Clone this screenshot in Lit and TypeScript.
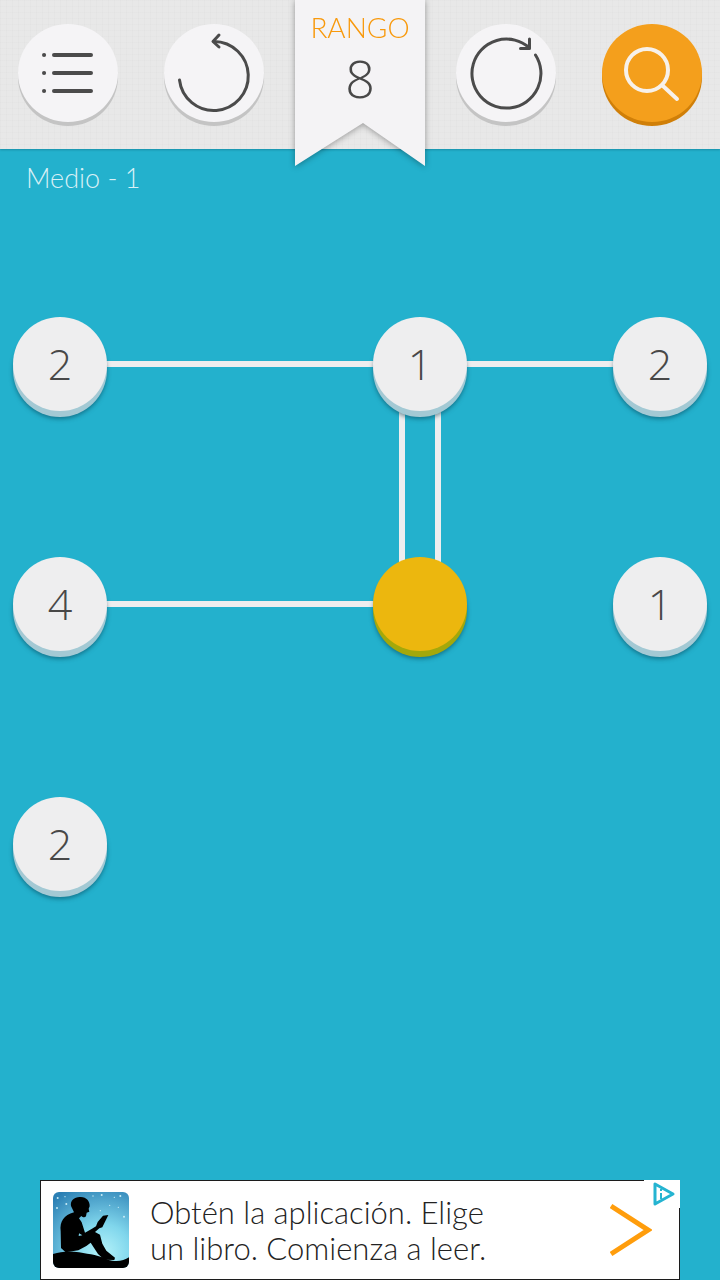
import { LitElement, html, css, svg, nothing } from "lit";
import { customElement, property, state } from "lit/decorators.js";
import { classMap } from "lit/directives/class-map.js";
import { styleMap } from "lit/directives/style-map.js";

interface GameNode {
  col: number;
  row: number;
  left: number;
}

interface Bridge {
  from: [number, number];
  to: [number, number];
  double?: boolean;
}

const NODES: GameNode[] = [
  { col: 0, row: 0, left: 2 },
  { col: 3, row: 0, left: 1 },
  { col: 5, row: 0, left: 2 },
  { col: 0, row: 1, left: 4 },
  { col: 3, row: 1, left: 0 },
  { col: 5, row: 1, left: 1 },
  { col: 0, row: 2, left: 2 },
];

const BRIDGES: Bridge[] = [
  { from: [0, 0], to: [3, 0] },
  { from: [3, 0], to: [5, 0] },
  { from: [0, 1], to: [3, 1] },
  { from: [3, 0], to: [3, 1], double: true },
];

@customElement("round-button")
class RoundButton extends LitElement {
  @property() label = "";
  @property({ type: Boolean, reflect: true }) accent = false;

  static styles = css`
    :host {
      display: block;
    }
    .button {
      display: block;
      width: 100px;
      height: 98px;
      padding: 0;
      border: 0;
      border-radius: 50%;
      background: #f5f4f6;
      color: #4b4b4b;
      box-shadow: 0 4px 0 #c4c4c4;
      cursor: pointer;
    }
    :host([accent]) .button {
      background: #f49f1c;
      color: #f7f1ea;
      box-shadow: 0 4px 0 #d07f08;
    }
  `;

  render() {
    return html`<button class="button" type="button" aria-label=${this.label}><slot></slot></button>`;
  }
}

@customElement("game-board")
class GameBoard extends LitElement {
  @state() private nodes = NODES;

  static styles = css`
    /* Every cell is split in two tracks, so bridges run from centre to centre. */
    .board {
      display: grid;
      grid-template-columns: repeat(12, 1fr);
      grid-auto-rows: 60px;
    }
    .node {
      place-self: center;
      z-index: 1;
      width: 94px;
      height: 94px;
      padding: 0;
      border: 0;
      border-radius: 50%;
      background: #eeeeef;
      color: #484848;
      font: 300 43px/92px "Open Sans", sans-serif;
      box-shadow: 0 6px 0 #a3c9d4, 0 8px 4px rgba(0, 60, 80, 0.5);
      cursor: pointer;
    }
    .done {
      background: #ecb70e;
      box-shadow: 0 6px 0 #a3a80b, 0 8px 4px rgba(0, 60, 80, 0.5);
    }
    .across {
      align-self: center;
      height: 6px;
      background: #eeeeef;
    }
    .down {
      justify-self: center;
      box-sizing: border-box;
      width: 6px;
      background: #eeeeef;
    }
    .double {
      width: 42px;
      background: none;
      border: solid #eeeeef;
      border-width: 0 6px;
    }
  `;

  private bridge({ from, to, double = false }: Bridge) {
    const across = from[1] === to[1];
    const area = across
      ? `${from[1] * 4 + 1} / ${from[0] * 2 + 2} / span 2 / ${to[0] * 2 + 2}`
      : `${from[1] * 4 + 2} / ${from[0] * 2 + 1} / ${to[1] * 4 + 2} / span 2`;
    return html`<span
      class=${classMap({ across, down: !across, double })}
      style=${styleMap({ gridArea: area })}
    ></span>`;
  }

  render() {
    return html`<div class="board">
      ${BRIDGES.map((b) => this.bridge(b))}
      ${this.nodes.map(
        (n) => html`<button
          type="button"
          class=${classMap({ node: true, done: n.left === 0 })}
          style=${styleMap({ gridArea: `${n.row * 4 + 1} / ${n.col * 2 + 1} / span 2 / span 2` })}
          aria-label=${n.left === 0 ? "Completo" : nothing}
        >${n.left || nothing}</button>`
      )}
    </div>`;
  }
}

@customElement("ad-banner")
class AdBanner extends LitElement {
  static styles = css`
    :host {
      display: block;
      position: relative;
      width: 100%;
      max-width: 640px;
    }
    .ad {
      box-sizing: border-box;
      display: flex;
      align-items: center;
      min-height: 100px;
      padding: 0 27px 0 12px;
      border: 1px solid #1c1c1c;
      background: #fff;
      color: #222;
      text-decoration: none;
      font: 300 31px/36px Lato, sans-serif;
    }
    .icon {
      flex: none;
      margin-right: 21px;
    }
    .copy {
      flex: 1;
    }
    .choices {
      position: absolute;
      top: 0;
      right: 0;
      width: 36px;
      height: 28px;
      background: #fff;
    }
    svg {
      display: block;
    }
  `;

  render() {
    const stars = [
      [14, 18, 3], [40, 36, 3], [12, 48, 3], [36, 14, 2], [146, 9, 3], [184, 16, 2],
      [202, 12, 3], [213, 74, 3], [196, 46, 2], [142, 56, 2], [170, 40, 2], [120, 12, 2],
    ];
    return html`
      <a class="ad" href="#">
        <svg class="icon" width="76" height="76" viewBox="0 0 228 228" aria-hidden="true">
          <defs>
            <radialGradient id="sky" cx="0.65" cy="0.8" r="0.95">
              <stop offset="0" stop-color="#b5f3fa" />
              <stop offset="0.4" stop-color="#80d6ec" />
              <stop offset="1" stop-color="#2b7fb4" />
            </radialGradient>
            <clipPath id="tile"><rect width="228" height="228" rx="18" /></clipPath>
          </defs>
          <g clip-path="url(#tile)">
            <rect width="228" height="228" fill="url(#sky)" />
            ${stars.map(([x, y, r]) => svg`<circle cx=${x} cy=${y} r=${r} fill="#c9ecf7" />`)}
            <path d="M0 186C25 178 50 176 78 181C112 187 140 190 164 203C190 211 212 207 228 196V228H0Z" />
            <path d="M54 42C51 26 64 15 80 15C99 13 111 27 110 43L107 50L109 59L101 62L99 73C95 78 89 76 85 72L78 79L86 91L96 122L117 110L129 103L134 90L150 71L166 69L148 106L139 109L126 120L141 128L148 155L160 176L186 197L184 204L154 203L135 186L113 152L100 162L76 175L38 181L24 168L23 118C20 88 32 70 63 61Z" />
            <path d="M78 124L88 130L77 132Z" fill="#7bd3ea" />
          </g>
        </svg>
        <span class="copy">Obtén la aplicación. Elige<br />un libro. Comienza a leer.</span>
        <svg width="42" height="54" viewBox="0 0 42 54" aria-hidden="true">
          <path d="M1 3L38 27L1 51" fill="none" stroke="#ff9d0c" stroke-width="5" />
        </svg>
      </a>
      <a class="choices" href="#" aria-label="Opciones de anuncios">
        <svg width="36" height="28" viewBox="0 0 36 28" fill="none" stroke="#25b4d1" aria-hidden="true">
          <path d="M11 4V24L29 14Z" stroke-width="3" stroke-linejoin="round" />
          <path d="M17 9V11M17 13V19" stroke-width="2" />
        </svg>
      </a>
    `;
  }
}

@customElement("app-root")
class AppRoot extends LitElement {
  static styles = css`
    :host {
      display: flex;
      flex-direction: column;
      min-height: 100vh;
      background: #23b1cd;
      font-family: Lato, sans-serif;
      font-weight: 300;
    }
    .bar {
      display: grid;
      grid-template-columns: repeat(5, 100px);
      justify-content: space-between;
      align-items: start;
      box-sizing: border-box;
      height: 149px;
      padding: 0 18px;
      background:
        repeating-linear-gradient(90deg, rgba(0, 0, 0, 0.01) 0 1px, transparent 1px 6px),
        repeating-linear-gradient(rgba(0, 0, 0, 0.01) 0 1px, transparent 1px 6px),
        #e8e8e8;
      box-shadow: 0 1px 2px rgba(0, 60, 80, 0.3);
    }
    round-button {
      margin-top: 24px;
    }
    .ribbon {
      display: grid;
      justify-self: center;
      width: 130px;
      text-align: center;
      filter: drop-shadow(0 1px 3px rgba(0, 0, 0, 0.35));
    }
    .ribbon > * {
      grid-area: 1 / 1;
    }
    .rank {
      display: flex;
      flex-direction: column;
      padding-top: 11px;
    }
    .caption {
      color: #f8990c;
      font-size: 28px;
      line-height: 32px;
    }
    .value {
      color: #484848;
      font-family: "Open Sans", sans-serif;
      font-size: 52px;
      line-height: 70px;
    }
    .level {
      margin: 0;
      padding: 13px 26px 0;
      color: #d8f0f6;
      font-size: 27px;
      font-weight: 300;
      line-height: 32px;
    }
    game-board {
      flex: 1;
      padding-top: 110px;
    }
    ad-banner {
      align-self: center;
    }
    svg {
      display: block;
    }
  `;

  render() {
    return html`
      <header class="bar">
        <round-button label="Menú">
          <svg width="100" height="98" viewBox="0 0 100 98" fill="none" stroke="currentColor" stroke-width="4" stroke-linecap="round">
            <path d="M36 31H73M36 49H73M36 67H73" />
            <path d="M26 31H26.1M26 49H26.1M26 67H26.1" />
          </svg>
        </round-button>
        <round-button label="Deshacer">
          <svg width="100" height="98" viewBox="0 0 100 98" fill="none" stroke="currentColor" stroke-width="3" stroke-linecap="round" stroke-linejoin="round">
            <path d="M15.500 56A34.500 34.500 0 1 0 50 17.500" />
            <path d="M55 11L49 17.500L55 23" />
          </svg>
        </round-button>
        <div class="ribbon">
          <svg width="130" height="166" viewBox="0 0 130 166" aria-hidden="true">
            <path d="M0 0H130V166L68 123L0 166Z" fill="#f4f3f5" />
          </svg>
          <div class="rank">
            <span class="caption">RANGO</span>
            <span class="value">8</span>
          </div>
        </div>
        <round-button label="Reiniciar">
          <svg width="100" height="98" viewBox="0 0 100 98" fill="none" stroke="currentColor" stroke-width="3" stroke-linecap="round" stroke-linejoin="round">
            <path d="M79.500 31A34.500 34.500 0 1 1 73 23.500" />
            <path d="M73.500 15V24.500H64.500" />
          </svg>
        </round-button>
        <round-button label="Buscar" accent>
          <svg width="100" height="98" viewBox="0 0 100 98" fill="none" stroke="currentColor" stroke-width="4" stroke-linecap="round">
            <circle cx="45" cy="46" r="21" />
            <path d="M61 62L75 75" />
          </svg>
        </round-button>
      </header>
      <h1 class="level">Medio - 1</h1>
      <game-board></game-board>
      <ad-banner></ad-banner>
    `;
  }
}
